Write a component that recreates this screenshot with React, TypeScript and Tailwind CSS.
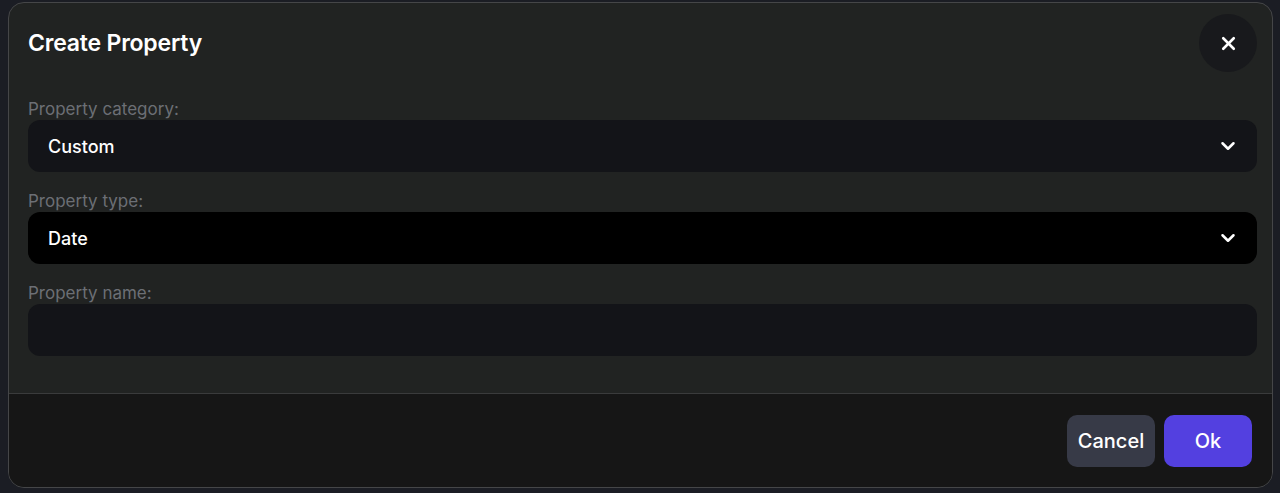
import React, { useState } from 'react';
import { ChevronDown, X } from 'lucide-react';

function SelectField({ label, value, dark }: { label: string; value: string; dark?: boolean }) {
  return (
    <div className="flex flex-col">
      <label className="h-[22px] text-[17px] leading-[22px] text-[#6c6f75]">{label}</label>
      <button
        className={`h-[52px] w-full rounded-[12px] flex items-center justify-between pl-[20px] pr-[18px] text-left ${
          dark ? 'bg-[#000000]' : 'bg-[#131418]'
        }`}
      >
        <span className="text-[18px] font-medium text-white">{value}</span>
        <ChevronDown size={22} strokeWidth={2.75} className="text-white" />
      </button>
    </div>
  );
}

export default function App() {
  const [name, setName] = useState('');

  return (
    <div
      className="w-[1280px] h-[493px] overflow-hidden bg-[#1b1d24] pt-[2px] pl-[8px]"
      style={{ fontFamily: 'Inter, "Noto Sans", sans-serif' }}
    >
      <div className="w-[1265px] h-[486px] rounded-[16px] border border-[#454648] bg-[#212322] overflow-hidden flex flex-col">
        <div className="flex items-center justify-between pl-[19px] pr-[15px] pt-[11px]">
          <h1 className="text-[23px] font-semibold text-white tracking-[-0.2px]">Create Property</h1>
          <button className="w-[58px] h-[58px] rounded-full bg-[#18191c] flex items-center justify-center">
            <X size={21} strokeWidth={3} className="text-white" />
          </button>
        </div>

        <div className="flex flex-col gap-[18px] pl-[19px] pr-[15px] pt-[26px] flex-1">
          <SelectField label="Property category:" value="Custom" />
          <SelectField label="Property type:" value="Date" dark />
          <div className="flex flex-col">
            <label className="h-[22px] text-[17px] leading-[22px] text-[#6c6f75]">Property name:</label>
            <input
              value={name}
              onChange={(e) => setName(e.target.value)}
              className="h-[52px] w-full rounded-[12px] bg-[#131418] px-[20px] text-[18px] text-white outline-none"
            />
          </div>
        </div>

        <div className="h-[94px] border-t border-[#3a3b3c] bg-[#161616] flex items-center justify-end gap-[9px] pr-[20px]">
          <button className="h-[52px] w-[88px] rounded-[10px] bg-[#373a47] text-[20px] font-medium text-white">
            Cancel
          </button>
          <button className="h-[52px] w-[88px] rounded-[10px] bg-[#5340e0] text-[20px] font-medium text-white">
            Ok
          </button>
        </div>
      </div>
    </div>
  );
}
